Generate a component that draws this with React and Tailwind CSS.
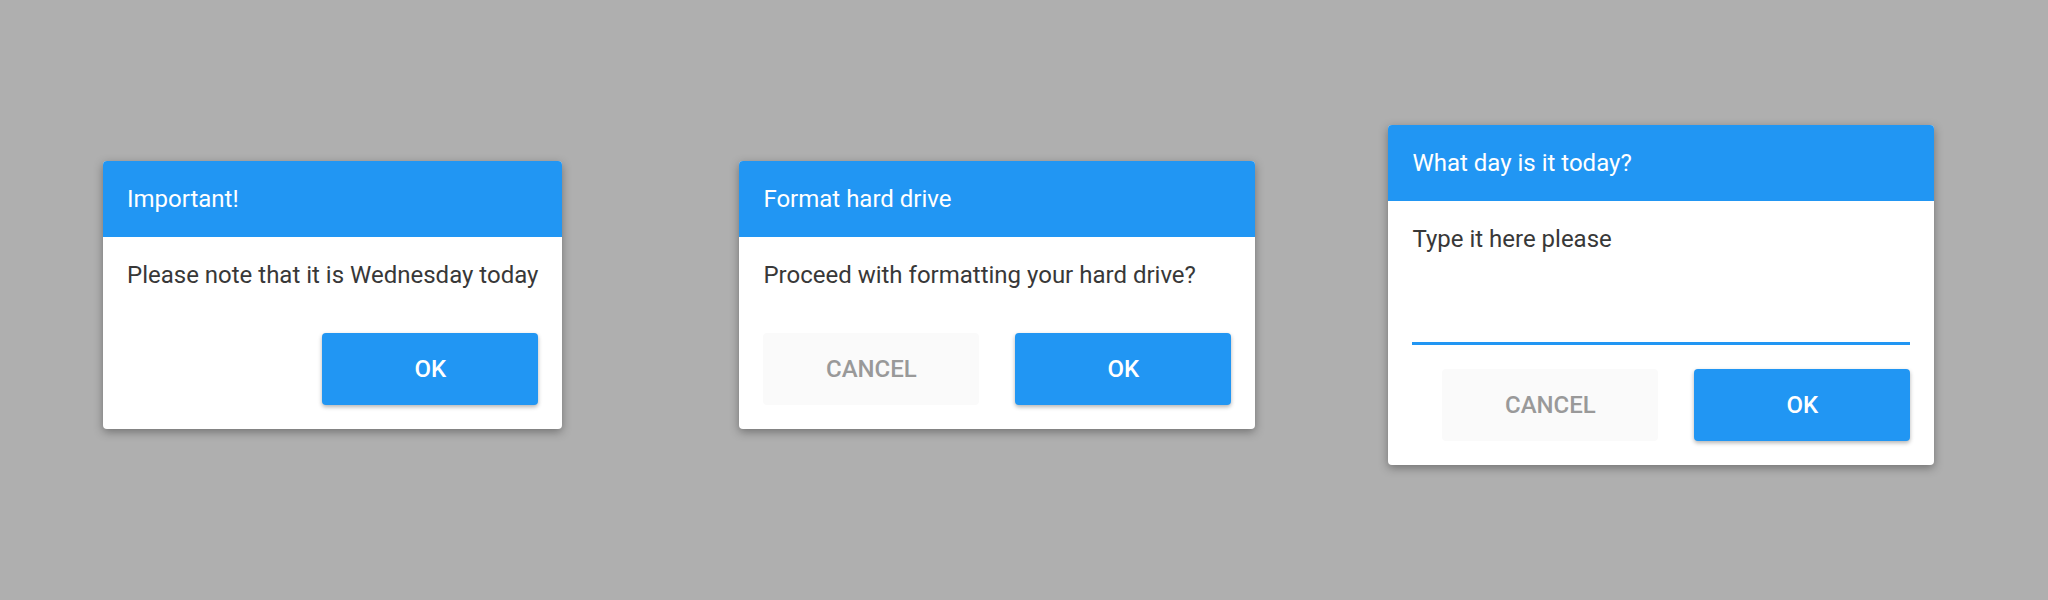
import React, { useState } from "react";

const font = { fontFamily: "Roboto, 'Noto Sans', sans-serif" };

const Header = ({ title }) => (
  <div className="bg-[#2196f3] px-6 py-6 text-[24px] leading-[28px] text-white rounded-t-[4px]">
    {title}
  </div>
);

const OkButton = () => (
  <button className="w-[216px] h-[72px] rounded-[4px] bg-[#2196f3] text-white text-[24px] font-medium shadow-[0_2px_4px_rgba(0,0,0,0.3)]">
    OK
  </button>
);

const CancelButton = () => (
  <button className="w-[216px] h-[72px] rounded-[4px] bg-[#fafafa] text-[#999] text-[24px] font-medium uppercase">
    Cancel
  </button>
);

const Dialog = ({ className = "", children }) => (
  <div className={`bg-white rounded-[4px] shadow-[0_3px_10px_rgba(0,0,0,0.35)] ${className}`}>
    {children}
  </div>
);

const App = () => {
  const [day, setDay] = useState("");

  return (
    <div
      className="w-[2048px] h-[600px] bg-[#afafaf] flex items-center pb-[10px] pl-[103px]"
      style={font}
    >
      <Dialog>
        <Header title="Important!" />
        <div className="px-6 pt-6 pb-6">
          <p className="text-[24px] leading-[28px] text-[#383838] whitespace-nowrap">
            Please note that it is Wednesday today
          </p>
          <div className="mt-[44px] flex justify-end">
            <OkButton />
          </div>
        </div>
      </Dialog>

      <Dialog className="ml-[177px]">
        <Header title="Format hard drive" />
        <div className="px-6 pt-6 pb-6">
          <p className="text-[24px] leading-[28px] text-[#383838] whitespace-nowrap">
            Proceed with formatting your hard drive?
          </p>
          <div className="mt-[44px] flex justify-end gap-[36px]">
            <CancelButton />
            <OkButton />
          </div>
        </div>
      </Dialog>

      <Dialog className="ml-[133px] w-[546px]">
        <Header title="What day is it today?" />
        <div className="px-6 pt-6 pb-6">
          <label className="block text-[24px] leading-[28px] text-[#383838]">
            Type it here please
          </label>
          <input
            value={day}
            onChange={(e) => setDay(e.target.value)}
            className="block w-full h-[92px] border-b-[3px] border-[#2196f3] bg-transparent outline-none text-[24px] text-[#383838]"
          />
          <div className="mt-[24px] flex justify-end gap-[36px]">
            <CancelButton />
            <OkButton />
          </div>
        </div>
      </Dialog>
    </div>
  );
};

export default App;
